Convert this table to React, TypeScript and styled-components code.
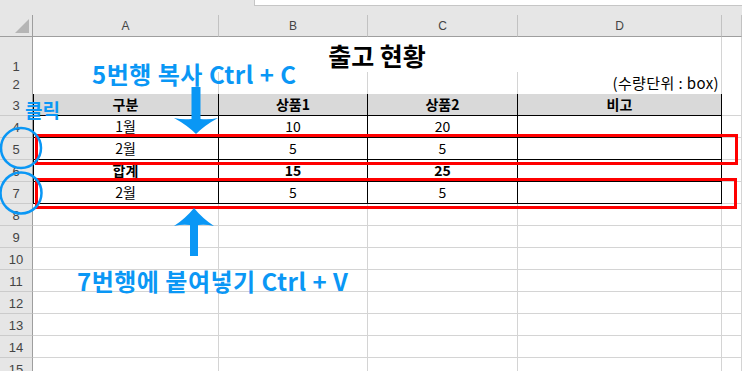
import styled, { createGlobalStyle, css } from 'styled-components';

const GlobalStyle = createGlobalStyle`
    html, body {
        margin: 0;
        padding: 0;
        background: #fff;
        overflow: hidden;
    }
`;

const ACCENT = '#0a97f5';
const GRID = '#d4d4d4';
const HEAD_BG = '#e6e6e6';
const COLUMNS = '33px 186px 149px 150px 204px 1fr';

type Edge = 'grid' | 'table' | 'tableTop';

interface CellData {
    text?: string;
    span?: number;
    align?: 'left' | 'center' | 'right';
    bold?: boolean;
    title?: boolean;
}

interface RowData {
    height: number;
    cells: CellData[];
    edge?: Edge;
    fill?: boolean;
}

const Sheet = styled.div`
    position: relative;
    width: 742px;
    height: 371px;
    overflow: hidden;
    font-family: "Noto Sans CJK KR", "Noto Sans", sans-serif;
    color: #000;
`;

const TopBar = styled.div`
    height: 15px;
    background: ${HEAD_BG};
    display: flex;
    justify-content: flex-end;
`;

const FormulaBox = styled.div`
    width: 487px;
    height: 5px;
    background: #fff;
    border-left: 1px solid #c6c6c6;
    border-bottom: 1px solid #c6c6c6;
`;

const Row = styled.div<{ $h: number }>`
    display: grid;
    grid-template-columns: ${COLUMNS};
    height: ${p => p.$h}px;
`;

const Corner = styled.div`
    position: relative;
    background: ${HEAD_BG};
    border-right: 1px solid #9e9e9e;
    border-bottom: 1px solid #9e9e9e;

    &::after {
        content: '';
        position: absolute;
        right: 3px;
        bottom: 3px;
        border-style: solid;
        border-width: 0 0 14px 14px;
        border-color: transparent transparent #b5b5b5 transparent;
    }
`;

const ColHead = styled.div`
    background: ${HEAD_BG};
    border-right: 1px solid #c2c2c2;
    border-bottom: 1px solid #9e9e9e;
    display: flex;
    align-items: center;
    justify-content: center;
    font-family: "Liberation Sans", "Noto Sans", sans-serif;
    font-size: 12px;
    color: #444;
`;

const RowHead = styled.div`
    background: ${HEAD_BG};
    border-right: 1px solid #9e9e9e;
    border-bottom: 1px solid #cbcbcb;
    display: flex;
    align-items: flex-end;
    justify-content: center;
    padding-bottom: 2px;
    box-sizing: border-box;
    font-family: "Liberation Sans", "Noto Sans", sans-serif;
    font-size: 13px;
    color: #444;
`;

const Cell = styled.div<{ $span: number; $edge: Edge; $fill: boolean; $align: string; $bold: boolean; $first: boolean; $title: boolean }>`
    grid-column: span ${p => p.$span};
    box-sizing: border-box;
    display: flex;
    align-items: center;
    justify-content: ${p => (p.$align === 'right' ? 'flex-end' : p.$align === 'left' ? 'flex-start' : 'center')};
    padding: 0 2px 1px;
    border-right: 1px solid ${p => (p.$edge === 'table' ? '#000' : GRID)};
    border-bottom: 1px solid ${p => (p.$edge === 'grid' ? GRID : '#000')};
    background: ${p => (p.$fill ? '#d9d9d9' : '#fff')};
    font-size: ${p => (p.$align === 'right' ? 15 : 14)}px;
    letter-spacing: ${p => (p.$align === 'right' ? 0.4 : 0)}px;
    font-weight: ${p => (p.$bold ? 700 : 400)};
    white-space: nowrap;
    ${p => p.$edge === 'table' && p.$first && css`box-shadow: inset 1px 0 0 #000;`}
    ${p => p.$title && css`
        align-items: flex-end;
        padding-bottom: 3px;
        font-size: 25px;
        font-weight: 700;
    `}
`;

const Overlay = styled.svg`
    position: absolute;
    inset: 0;
    pointer-events: none;
`;

const Callout = styled.span<{ $x: number; $y: number; $size: number; $spacing?: number }>`
    position: absolute;
    left: ${p => p.$x}px;
    top: ${p => p.$y}px;
    font-size: ${p => p.$size}px;
    font-weight: 700;
    color: ${ACCENT};
    letter-spacing: ${p => p.$spacing ?? 0}px;
    white-space: nowrap;
    line-height: 1;
`;

const table = (texts: string[], opts: { bold?: boolean; fill?: boolean } = {}): RowData => ({
    height: 22,
    edge: 'table',
    fill: opts.fill,
    cells: texts.map(text => ({ text, bold: opts.bold })),
});

const blank: RowData = { height: 22, cells: [{}, {}, {}, {}] };

const rows: RowData[] = [
    { height: 35, cells: [{ text: '출고 현황', span: 4, title: true }] },
    { height: 22, edge: 'tableTop', cells: [{}, {}, {}, { text: '(수량단위 : box)', align: 'right' }] },
    table(['구분', '상품1', '상품2', '비고'], { bold: true, fill: true }),
    table(['1월', '10', '20', '']),
    table(['2월', '5', '5', '']),
    table(['합계', '15', '25', ''], { bold: true }),
    table(['2월', '5', '5', '']),
    ...Array.from({ length: 8 }, () => blank),
];

const SheetRow = ({ n, row }: { n: number; row: RowData }) => (
    <Row $h={row.height}>
        <RowHead>{n}</RowHead>
        {row.cells.map((c, i) => (
            <Cell
                key={i}
                $span={c.span ?? 1}
                $edge={row.edge ?? 'grid'}
                $fill={!!row.fill}
                $align={c.align ?? 'center'}
                $bold={!!c.bold}
                $first={i === 0}
                $title={!!c.title}
            >
                {c.text}
            </Cell>
        ))}
        <Cell $span={1} $edge="grid" $fill={false} $align="center" $bold={false} $first={false} $title={false} />
    </Row>
);

const App = () => (
    <>
        <GlobalStyle />
        <Sheet>
            <TopBar>
                <FormulaBox />
            </TopBar>
            <Row $h={22}>
                <Corner />
                {['A', 'B', 'C', 'D', ''].map(l => (
                    <ColHead key={l}>{l}</ColHead>
                ))}
            </Row>
            {rows.map((row, i) => (
                <SheetRow key={i} n={i + 1} row={row} />
            ))}

            <Overlay width="742" height="371" viewBox="0 0 742 371">
                {/* copied / pasted row frames */}
                <rect x="36.5" y="135.5" width="700" height="28" fill="none" stroke="#ff0000" strokeWidth="3" />
                <rect x="36.5" y="179.5" width="699" height="28" fill="none" stroke="#ff0000" strokeWidth="3" />

                {/* clicked row numbers */}
                <circle cx="21" cy="148" r="20" fill="none" stroke={ACCENT} strokeWidth="2.5" />
                <circle cx="21" cy="193" r="20.5" fill="none" stroke={ACCENT} strokeWidth="2.5" />

                {/* down arrow to row 5 */}
                <path
                    d="M191.5 87 H200.5 V119 Q209 120 218 118 Q205 125 196 134 Q187 125 174 118 Q183 120 191.5 119 Z"
                    fill={ACCENT}
                />
                {/* up arrow to row 7 */}
                <path
                    d="M190 256 H198 V225 Q206 224 214 226 Q202 218 194 208 Q186 218 174 226 Q182 224 190 225 Z"
                    fill={ACCENT}
                />
            </Overlay>

            <Callout $x={92} $y={62} $size={24} $spacing={0.5}>5번행 복사 Ctrl + C</Callout>
            <Callout $x={25} $y={100} $size={19}>클릭</Callout>
            <Callout $x={77} $y={269} $size={24} $spacing={0.5}>7번행에 붙여넣기 Ctrl + V</Callout>
        </Sheet>
    </>
);

export default App;
